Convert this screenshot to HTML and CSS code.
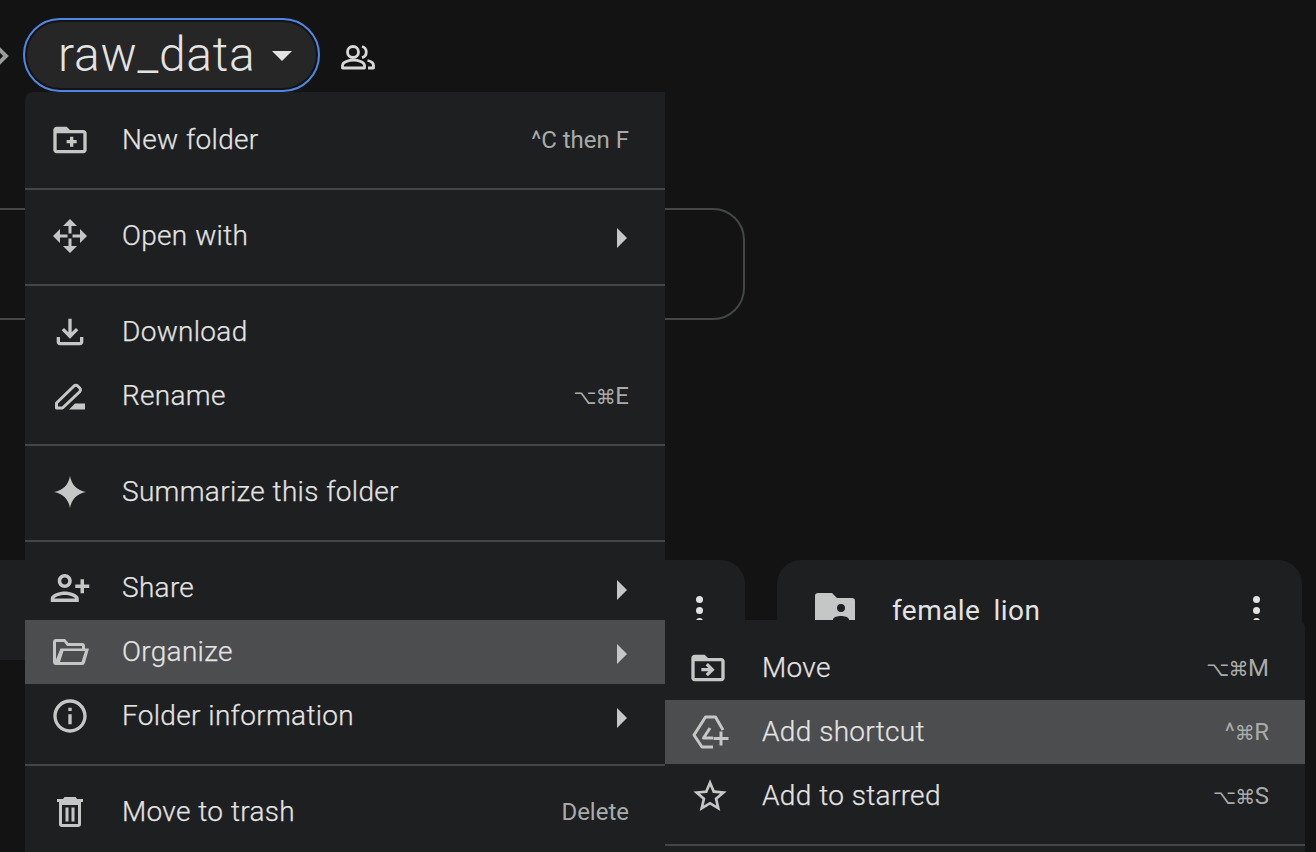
FILE: index.html
```html
<!DOCTYPE html>
<html lang="en">
<head>
<meta charset="utf-8">
<title>raw_data</title>
<link rel="stylesheet" href="styles.css">
</head>
<body>
<div class="page">
  <header class="crumbs">
    <svg class="crumb-chevron" viewBox="0 0 23 24"><path d="M-2 5 L6 13 L-2 21" /></svg>
    <div class="pill"><span class="pill-name">raw_data</span><span class="caret"></span></div>
    <svg class="people" viewBox="0 0 40 40"><circle cx="14" cy="17" r="5.500"/><path d="M3.500 33v-2.500C3.500 27 10 25 14.500 25s11 2 11 5.500V33Z"/><path d="M23 11.500a5.800 5.800 0 0 1 0 11.200"/><path d="M28.500 25.500c3.500.7 6 2.500 6 5V33H29"/></svg>
  </header>

  <div class="filter-box"></div>

  <div class="cards">
    <div class="card card-left">
      <span class="kebab"><i></i><i></i><i></i></span>
    </div>
    <div class="card card-right">
      <svg class="shared-folder" viewBox="0 0 40 40"><path fill-rule="evenodd" d="M3 0h14l5 5h15a3 3 0 0 1 3 3v29a3 3 0 0 1-3 3H3a3 3 0 0 1-3-3V3a3 3 0 0 1 3-3zM26 11a4 4 0 1 0 0 8 4 4 0 0 0 0-8zM18 30h16v-3.500c0-2.500-5-3.500-8-3.500s-8 1-8 3.500z"/></svg>
      <span class="card-name">female_lion</span>
      <span class="kebab"><i></i><i></i><i></i></span>
    </div>
  </div>

  <nav class="menu menu-main">
    <div class="group">
      <div class="row">
        <svg class="icon" viewBox="0 0 24 24"><path d="M20 6h-8l-2-2H4c-1.110 0-1.990.89-1.990 2L2 18c0 1.110.89 2 2 2h16c1.110 0 2-.89 2-2V8c0-1.110-.89-2-2-2zm0 12H4V8h16v10zm-8-2h2v-2h2v-2h-2v-2h-2v2h-2v2h2z"/></svg>
        <span class="label">New folder</span><span class="keys">^C then F</span>
      </div>
    </div>
    <div class="group">
      <div class="row">
        <svg class="icon" viewBox="0 0 40 40"><path d="M20 3l7 7h-5.500v7.500h-3V10H13ZM20 37l-7-7h5.500v-7.500h3V30H27ZM3 20l7-7v5.500h7.500v3H10V27ZM37 20l-7 7v-5.500h-7.500v-3H30V13Z"/></svg>
        <span class="label">Open with</span><span class="arrow"></span>
      </div>
    </div>
    <div class="group">
      <div class="row">
        <svg class="icon" viewBox="0 0 24 24"><path d="M18 15v3H6v-3H4v3c0 1.100.9 2 2 2h12c1.100 0 2-.9 2-2v-3h-2zm-1-4l-1.410-1.410L13 12.170V4h-2v8.170L8.410 9.590 7 11l5 5 5-5z"/></svg>
        <span class="label">Download</span>
      </div>
      <div class="row">
        <svg class="icon" viewBox="0 0 40 40"><path class="line line-heavy" d="M6.500 32V27L24 10a2.600 2.600 0 0 1 3.700 0l2 2a2.600 2.600 0 0 1 0 3.700L12.500 32Z"/><path d="M19 33.500l6-6H35v6Z"/></svg>
        <span class="label">Rename</span><span class="keys"><span class="sym">⌥⌘</span>E</span>
      </div>
    </div>
    <div class="group">
      <div class="row">
        <svg class="icon" viewBox="0 0 40 40"><path d="M20 4Q22.500 17.500 36 20 22.500 22.500 20 36 17.500 22.500 4 20 17.500 17.500 20 4Z"/></svg>
        <span class="label">Summarize this folder</span>
      </div>
    </div>
    <div class="group">
      <div class="row">
        <svg class="icon icon-wide" viewBox="0 0 24 24"><path transform="matrix(-1 0 0 1 24 0)" d="M15 12c2.210 0 4-1.790 4-4s-1.790-4-4-4-4 1.790-4 4 1.790 4 4 4zm0-6c1.100 0 2 .9 2 2s-.9 2-2 2-2-.9-2-2 .9-2 2-2zm0 8c-2.670 0-8 1.340-8 4v2h16v-2c0-2.660-5.330-4-8-4zm-6 4c.22-.72 3.310-2 6-2 2.700 0 5.800 1.290 6 2H9zm-3-3v-3h3v-2H6V7H4v3H1v2h3v3h2z"/></svg>
        <span class="label">Share</span><span class="arrow"></span>
      </div>
      <div class="row row-active">
        <svg class="icon" viewBox="0 0 40 40"><path fill-rule="evenodd" d="M6 7h9l3.500 4H32a3 3 0 0 1 3 3v2.500h4L35 30.500a3 3 0 0 1-3 2.500H6a3 3 0 0 1-3-3V10a3 3 0 0 1 3-3zM10 30H31.500L35 19H13.500ZM6 27.500 10.500 16.500H32V14H17L14 10H6Z"/></svg>
        <span class="label">Organize</span><span class="arrow"></span>
      </div>
      <div class="row">
        <svg class="icon" viewBox="0 0 24 24"><path d="M11 7h2v2h-2zm0 4h2v6h-2zm1-9C6.480 2 2 6.480 2 12s4.480 10 10 10 10-4.480 10-10S17.520 2 12 2zm0 18c-4.410 0-8-3.590-8-8s3.590-8 8-8 8 3.590 8 8-3.590 8-8 8z"/></svg>
        <span class="label">Folder information</span><span class="arrow"></span>
      </div>
    </div>
    <div class="group">
      <div class="row">
        <svg class="icon" viewBox="0 0 40 40"><path fill-rule="evenodd" d="M14.500 5h11l1.500 2H33v3H7V7h6ZM9 10H31V32a3 3 0 0 1-3 3H12a3 3 0 0 1-3-3ZM12 13V32H28V13ZM15.500 15.500h3v14h-3ZM21.500 15.500h3v14h-3Z"/></svg>
        <span class="label">Move to trash</span><span class="keys">Delete</span>
      </div>
    </div>
  </nav>

  <nav class="menu menu-sub">
    <div class="group">
      <div class="row">
        <svg class="icon icon-shift" viewBox="0 0 24 24"><path d="M20 6h-8l-2-2H4c-1.100 0-2 .9-2 2v12c0 1.100.9 2 2 2h16c1.100 0 2-.9 2-2V8c0-1.100-.9-2-2-2zm0 12H4V8h16v10zm-8.010-9l-1.410 1.410L12.160 12H8v2h4.160l-1.590 1.590L11.990 17 16 13.010 11.990 9z"/></svg>
        <span class="label">Move</span><span class="keys"><span class="sym">⌥⌘</span>M</span>
      </div>
      <div class="row row-active">
        <svg class="icon" viewBox="0 0 40 40"><path class="line line-heavy" d="M33 18 L25.500 5H15.500L4 23 L12 35H23M20 16 L13.500 26H23"/><path d="M29.500 19.500h3V25h6v3h-6v5.500h-3V28h-6v-3h6Z"/></svg>
        <span class="label">Add shortcut</span><span class="keys">^<span class="sym">⌘</span>R</span>
      </div>
      <div class="row">
        <svg class="icon" viewBox="0 0 24 24"><path d="M22 9.240l-7.190-.62L12 2 9.190 8.630 2 9.240l5.460 4.730L5.820 21 12 17.270 18.180 21l-1.630-7.030L22 9.240zM12 15.400l-3.760 2.270 1-4.280-3.320-2.880 4.380-.38L12 6.100l1.710 4.040 4.380.38-3.320 2.880 1 4.280L12 15.400z"/></svg>
        <span class="label">Add to starred</span><span class="keys"><span class="sym">⌥⌘</span>S</span>
      </div>
    </div>
    <div class="group"></div>
  </nav>
</div>
</body>
</html>
```
FILE: styles.css
```css
* { box-sizing: border-box; }
html, body { margin: 0; height: 100%; }
body { background: #131314; overflow: hidden; font-family: Roboto, "DejaVu Sans", sans-serif; color: #e3e3e3; }
.page { position: relative; width: 1316px; height: 852px; overflow: hidden; }

.crumbs { display: flex; align-items: center; padding-top: 18px; height: 92px; }
.crumb-chevron { width: 23px; height: 24px; fill: none; stroke: #9a9c9b; stroke-width: 4; }
.pill { display: flex; align-items: center; width: 297px; height: 74px; padding-left: 33px; border: 2px solid #4f86e3; border-radius: 37px; background: #262626; box-shadow: inset 0 0 0 2px #131314; }
.pill-name { font-size: 48px; font-weight: 300; line-height: 1; letter-spacing: 0.75px; }
.caret { margin-left: 16px; margin-top: 2px; border-left: 10px solid transparent; border-right: 10px solid transparent; border-top: 10px solid #e3e3e3; }
.people { width: 40px; height: 40px; margin-left: 19px; fill: none; stroke: #d8d8d8; stroke-width: 2.800; stroke-linejoin: round; }

.filter-box { width: 805px; height: 112px; margin: 116px 0 0 -60px; border: 2px solid #444746; border-radius: 32px; }

.cards { display: grid; grid-template-columns: 805px 525px; column-gap: 32px; margin: 240px 0 0 -60px; }
.card { display: flex; align-items: flex-start; height: 100px; background: #1e1f20; border-radius: 24px; padding-top: 26px; }
.card-left { justify-content: flex-end; padding-right: 42px; }
.card-right { padding-left: 38px; padding-right: 42px; }
.shared-folder { width: 40px; height: 40px; margin-top: 7px; fill: #c4c7c5; flex: none; }
.card-name { flex: 1; margin-left: 37px; font-size: 28px; font-weight: 400; line-height: 50px; letter-spacing: 0.45px; }
.kebab { display: flex; flex-direction: column; gap: 4px; padding-top: 10px; }
.kebab i { display: block; width: 7px; height: 7px; border-radius: 50%; background: #e3e3e3; }

.menu { position: absolute; width: 640px; background: #1e1f20; }
.menu-main { left: 25px; top: 92px; border-radius: 8px 0 0 0; }
.menu-sub { left: 665px; top: 620px; border-radius: 0 8px 0 0; }
.group { padding: 14px 0 16px; border-bottom: 2px solid #444746; }
.group:first-child { padding-top: 16px; }
.group:last-child { border-bottom: 0; }

.row { display: flex; align-items: center; height: 64px; padding: 0 36px 0 25px; }
.row-active { background: #4c4d4f; }
.icon { flex: none; width: 40px; height: 40px; fill: #c4c7c5; }
.icon-wide { width: 42px; height: 42px; margin: 0 -1px; }
.icon-shift { margin: 0 2px 0 -2px; }
.line { fill: none; stroke: #c4c7c5; stroke-width: 2.600; stroke-linejoin: round; }
.line-heavy { stroke-width: 3; }
.label { flex: 1; margin-left: 32px; font-size: 28px; font-weight: 300; letter-spacing: 0.3px; word-spacing: 0.5px; line-height: 1; -webkit-text-stroke: 0.25px #e3e3e3; }
.keys { font-size: 24px; letter-spacing: 0; color: #a8abaa; line-height: 1; }
.sym { font-size: 20px; letter-spacing: -0.5px; }
.arrow { margin: 4px 2px 0 0; border-top: 10px solid transparent; border-bottom: 10px solid transparent; border-left: 10px solid #c4c7c5; }
```
